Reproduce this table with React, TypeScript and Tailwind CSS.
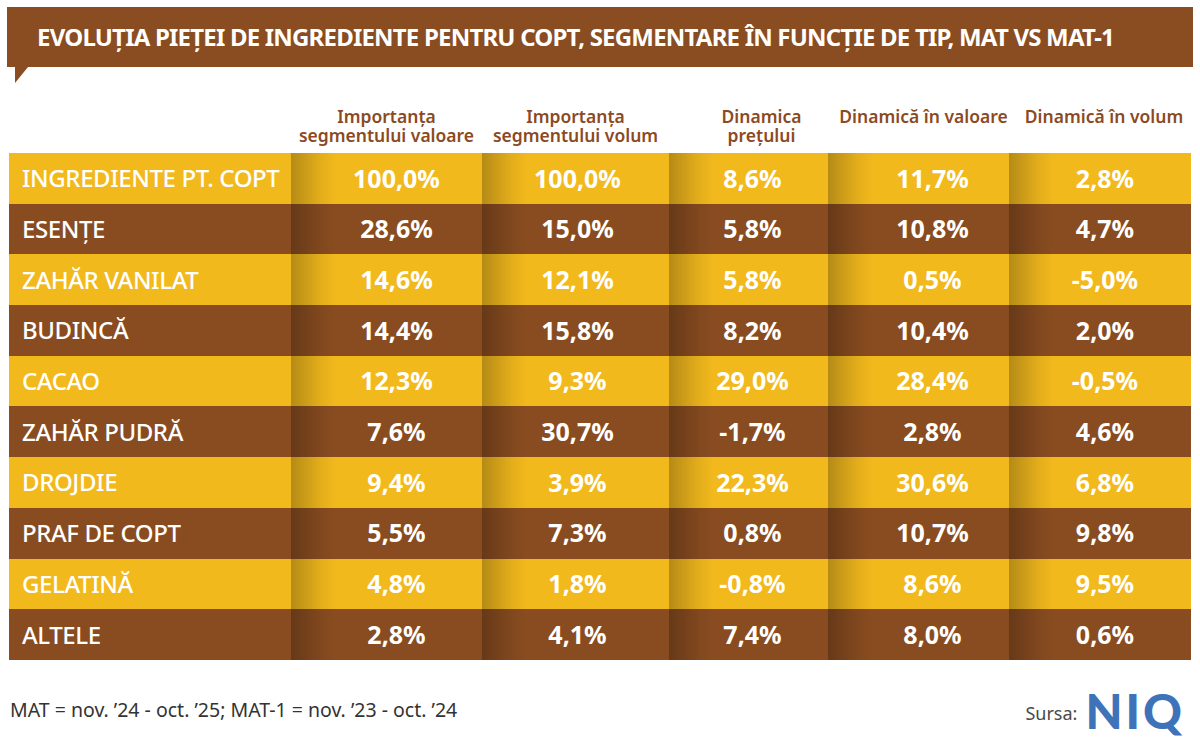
import React from 'react'

const rows = [
  ['INGREDIENTE PT. COPT', '100,0%', '100,0%', '8,6%', '11,7%', '2,8%'],
  ['ESENȚE', '28,6%', '15,0%', '5,8%', '10,8%', '4,7%'],
  ['ZAHĂR VANILAT', '14,6%', '12,1%', '5,8%', '0,5%', '-5,0%'],
  ['BUDINCĂ', '14,4%', '15,8%', '8,2%', '10,4%', '2,0%'],
  ['CACAO', '12,3%', '9,3%', '29,0%', '28,4%', '-0,5%'],
  ['ZAHĂR PUDRĂ', '7,6%', '30,7%', '-1,7%', '2,8%', '4,6%'],
  ['DROJDIE', '9,4%', '3,9%', '22,3%', '30,6%', '6,8%'],
  ['PRAF DE COPT', '5,5%', '7,3%', '0,8%', '10,7%', '9,8%'],
  ['GELATINĂ', '4,8%', '1,8%', '-0,8%', '8,6%', '9,5%'],
  ['ALTELE', '2,8%', '4,1%', '7,4%', '8,0%', '0,6%'],
]

// header lines + small nudge so they sit like the original
const headers = [
  { lines: ['Importanța', 'segmentului valoare'], cls: '' },
  { lines: ['Importanța', 'segmentului volum'], cls: '' },
  { lines: ['Dinamica', 'prețului'], cls: 'pl-[26px]' },
  { lines: ['Dinamică în valoare'], cls: 'pl-[10px]' },
  { lines: ['Dinamică în volum'], cls: 'pl-[6px]' },
]

const valuePad = ['pl-[20px]', 'pl-[4px]', 'pl-[8px]', 'pl-[28px]', 'pl-[8px]']

const cols = 'grid grid-cols-[282px_191px_187px_159px_181px_184px]'

export default function App() {
  return (
    <div className="w-[1200px] h-[750px] bg-white font-['Noto_Sans',sans-serif] overflow-hidden">
      <div className="mx-[7px] pt-[7px]">
        <div className="h-[60px] bg-[#8A4C21] flex items-center pl-[30px]">
          <h1 className="text-white text-[24px] font-bold tracking-[-0.8px] whitespace-nowrap">
            EVOLUȚIA PIEȚEI DE INGREDIENTE PENTRU COPT, SEGMENTARE ÎN FUNCȚIE DE TIP, MAT VS MAT-1
          </h1>
        </div>
        <div className="ml-[8px] w-0 h-0 border-t-[16px] border-t-[#8A4C21] border-r-[13px] border-r-transparent" />
      </div>

      <div className="mx-[9px]">
        <div className={`${cols} h-[70px] pt-[24px]`}>
          <div />
          {headers.map((h, i) => (
            <div key={i} className={`text-center text-[#8B4A1F] text-[17.5px] font-semibold leading-[19px] ${h.cls}`}>
              {h.lines.map(l => <div key={l}>{l}</div>)}
            </div>
          ))}
        </div>

        <div>
          {rows.map((r, i) => (
            <div key={r[0]} className={`${cols} h-[50.7px] ${i % 2 === 0 ? 'bg-[#F2B91D]' : 'bg-[#894C20]'}`}>
              <div className="flex items-center pl-[13px] text-white text-[24px] font-medium tracking-[-0.4px] whitespace-nowrap">{r[0]}</div>
              {r.slice(1).map((v, j) => (
                <div key={j} className={`flex items-center justify-center ${valuePad[j]} bg-[linear-gradient(to_right,rgba(0,0,0,0.25),rgba(0,0,0,0.06)_30px,rgba(0,0,0,0)_45px)] text-white text-[25px] font-bold`}>
                  {v}
                </div>
              ))}
            </div>
          ))}
        </div>
      </div>

      <div className="flex justify-between items-end pl-[10px] pr-[18px] mt-[31px]">
        <p className="text-[#333] text-[19.5px] mb-[7px]">MAT = nov. ’24 - oct. ’25; MAT-1 = nov. ’23 - oct. ’24</p>
        <div className="flex items-end gap-[8px]">
          <span className="text-[#4a4a4a] text-[18px] mb-[4px]">Sursa:</span>
          <span className="font-['Lato',sans-serif] font-black text-[48px] leading-[40px] text-[#3E73BA] tracking-[3px] mr-[-3px]">NIQ</span>
        </div>
      </div>
    </div>
  )
}
